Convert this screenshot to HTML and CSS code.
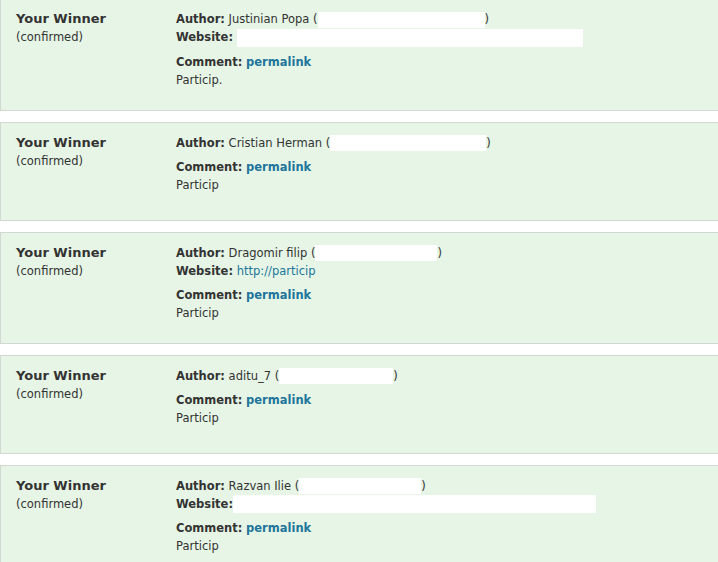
FILE: index.html
```html
<!DOCTYPE html>
<html>
<head>
<meta charset="utf-8">
<link rel="stylesheet" href="styles.css">
</head>
<body>
<div class="list">
  <div class="card">
    <div class="who">
      <div class="title">Your Winner</div>
      <div class="status">(confirmed)</div>
    </div>
    <div class="info">
      <div class="line"><b>Author:</b> Justinian Popa (<span class="redact" style="width:167px"></span>)</div>
      <div class="line"><b>Website:</b> <span class="redact tall" style="width:346px"></span></div>
      <div class="line gap"><b>Comment:</b> <a href="#">permalink</a></div>
      <div class="line">Particip.</div>
    </div>
  </div>
  <div class="card">
    <div class="who">
      <div class="title">Your Winner</div>
      <div class="status">(confirmed)</div>
    </div>
    <div class="info">
      <div class="line"><b>Author:</b> Cristian Herman (<span class="redact" style="width:156px"></span>)</div>
      <div class="line gap"><b>Comment:</b> <a href="#">permalink</a></div>
      <div class="line">Particip</div>
    </div>
  </div>
  <div class="card">
    <div class="who">
      <div class="title">Your Winner</div>
      <div class="status">(confirmed)</div>
    </div>
    <div class="info">
      <div class="line"><b>Author:</b> Dragomir filip (<span class="redact" style="width:122px"></span>)</div>
      <div class="line"><b>Website:</b> <a class="plain" href="#">http://particip</a></div>
      <div class="line gap"><b>Comment:</b> <a href="#">permalink</a></div>
      <div class="line">Particip</div>
    </div>
  </div>
  <div class="card">
    <div class="who">
      <div class="title">Your Winner</div>
      <div class="status">(confirmed)</div>
    </div>
    <div class="info">
      <div class="line"><b>Author:</b> aditu_7 (<span class="redact" style="width:114px"></span>)</div>
      <div class="line gap"><b>Comment:</b> <a href="#">permalink</a></div>
      <div class="line">Particip</div>
    </div>
  </div>
  <div class="card">
    <div class="who">
      <div class="title">Your Winner</div>
      <div class="status">(confirmed)</div>
    </div>
    <div class="info">
      <div class="line"><b>Author:</b> Razvan Ilie (<span class="redact" style="width:122px"></span>)</div>
      <div class="line"><b>Website:</b><span class="redact tall" style="width:363px"></span></div>
      <div class="line gap"><b>Comment:</b> <a href="#">permalink</a></div>
      <div class="line">Particip</div>
    </div>
  </div>
</div>
</body>
</html>
```
FILE: styles.css
```css
html, body {
  margin: 0;
  padding: 0;
  background: #ffffff;
}
body {
  font-family: "DejaVu Sans", Verdana, sans-serif;
  color: #333333;
  font-size: 11.5px;
  line-height: 18px;
  overflow: hidden;
}
.list {
  margin-top: -2px;
  display: flex;
  flex-direction: column;
  gap: 11px;
}
.card {
  display: flex;
  background: #e6f5e6;
  border: 1px solid #d2d8d2;
  border-right: none;
  padding: 11px 0 21px 15px;
  min-height: 65px;
}
.who {
  width: 160px;
  flex: none;
}
.title {
  font-size: 13px;
  font-weight: bold;
}
.status {
  font-size: 11.5px;
}
.info {
  flex: 1;
}
.line {
  white-space: nowrap;
}
.line b {
  font-weight: bold;
}
.gap {
  margin-top: 6px;
}
a {
  color: #21759b;
  font-weight: bold;
  text-decoration: none;
}
a.plain {
  font-weight: normal;
}
.redact {
  display: inline-block;
  height: 16px;
  background: #ffffff;
  vertical-align: middle;
}
.redact.tall {
  height: 18px;
}
```
